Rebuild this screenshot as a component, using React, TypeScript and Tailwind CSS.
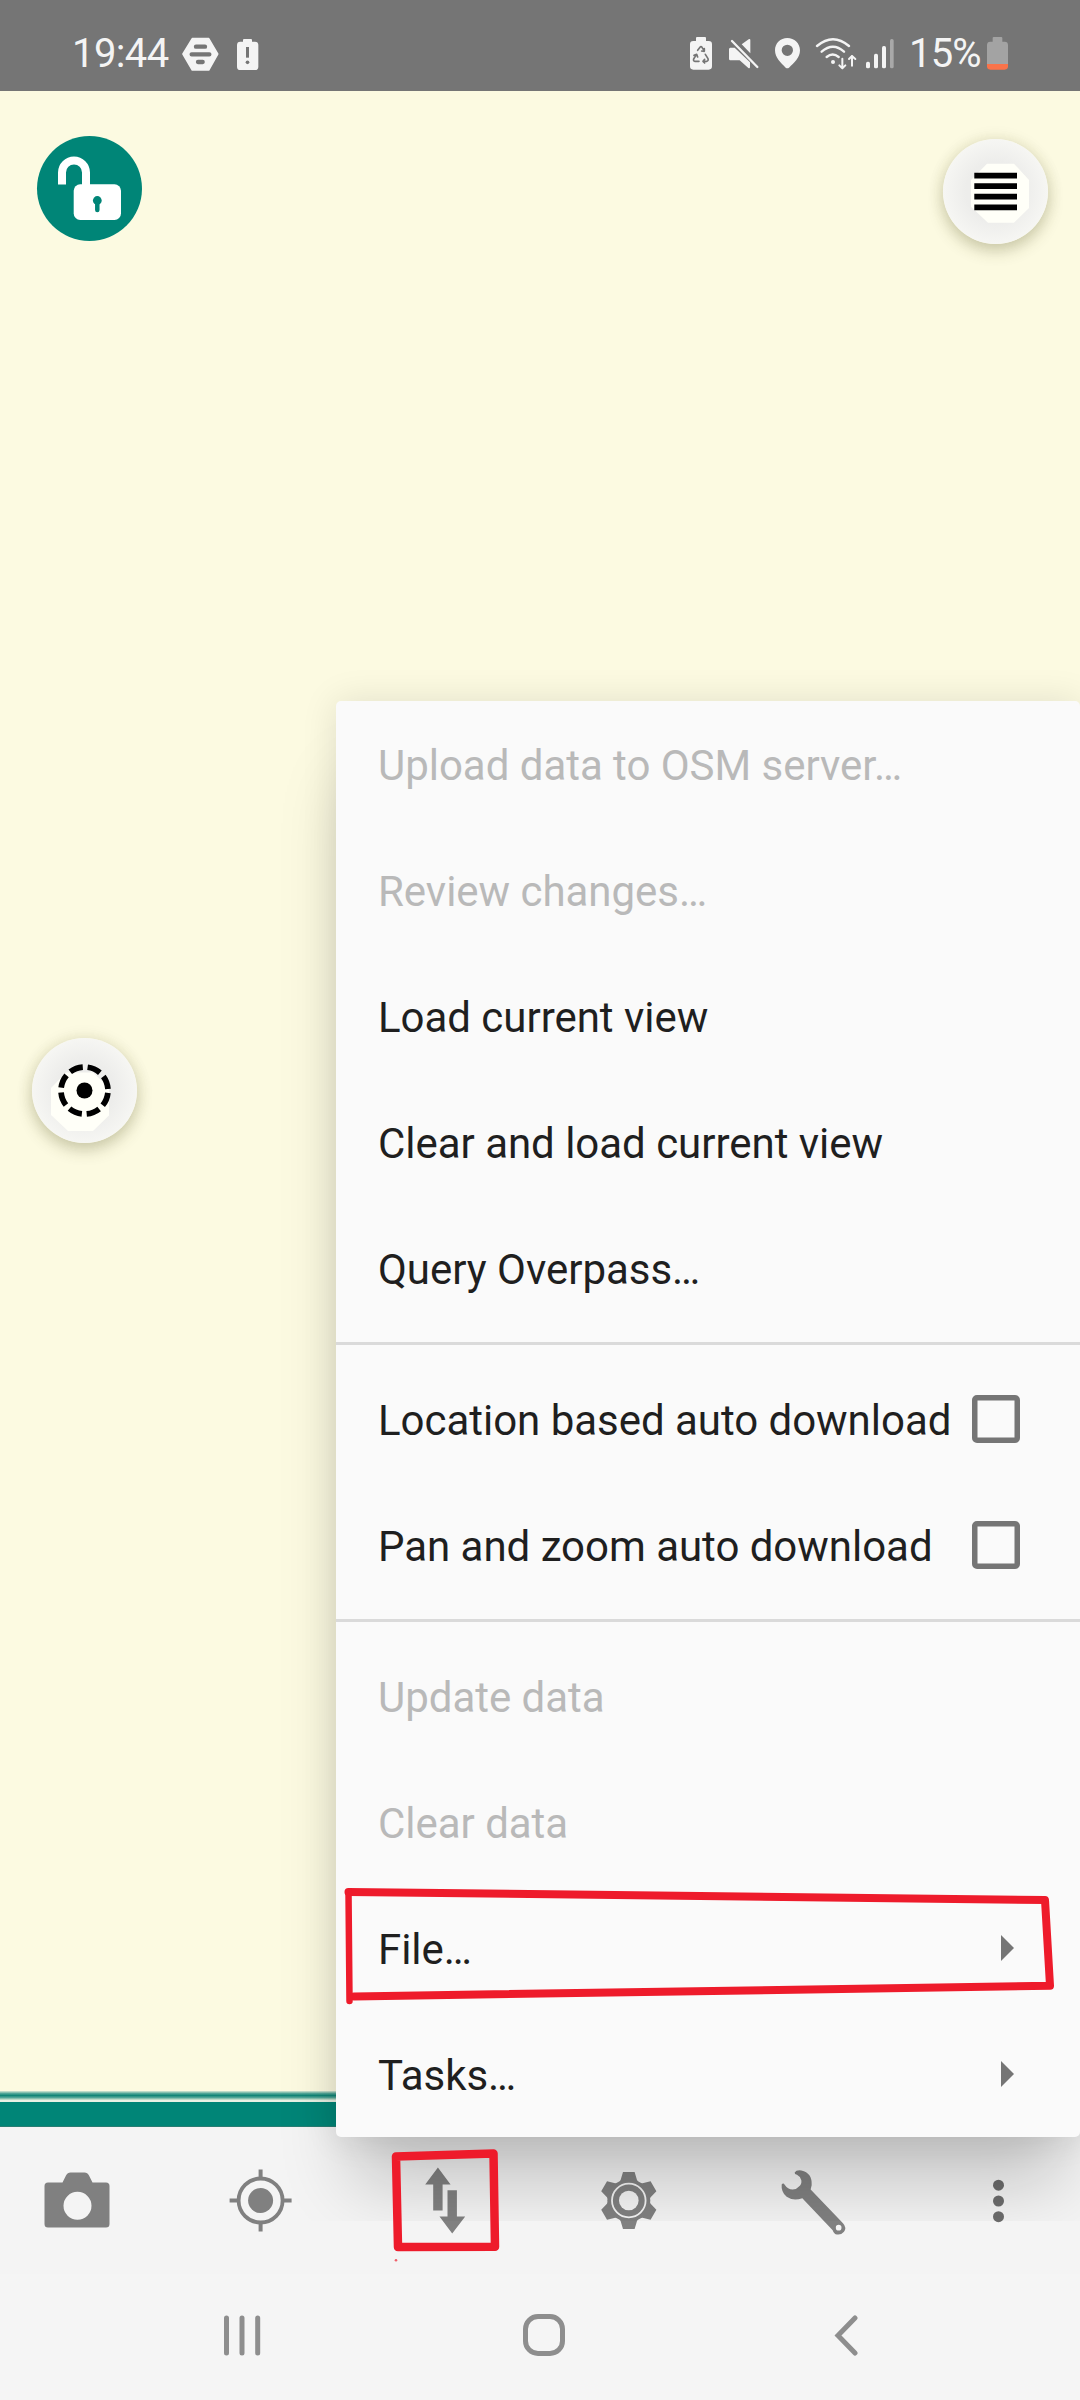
import type { ReactNode } from "react";

/* Status glyphs are drawn on a 3x grid: 102 units high = 34px. */
function StatusIcon({ x, w, children }: { x: number; w: number; children: ReactNode }) {
  return (
    <svg className="block shrink-0" width={w} height={34} viewBox={`${x} 111 ${w * 3} 102`} fill="#f4f4f4">
      {children}
    </svg>
  );
}

function StatusBar() {
  return (
    <header className="flex h-[91px] shrink-0 items-center justify-between bg-[#757575] pt-[17px] pr-[71px] pl-[72px] text-[40px] leading-none text-[#f4f4f4]">
      <div className="flex items-center">
        <span className="w-[109px] tracking-[-0.6px]">19:44</span>
        <StatusIcon x={543} w={39}>
          <path
            d="M577 116h49l27 46-27 48h-49l-28-48z"
            stroke="#f4f4f4"
            strokeWidth="5"
            strokeLinejoin="round"
          />
          <path d="M588 140h27M575 163h53M594 186h14" stroke="#757575" strokeWidth="13" strokeLinecap="round" />
        </StatusIcon>
        <span className="w-[15px]" />
        <StatusIcon x={705} w={25}>
          <path d="M729 120q0-3 3-3h21q3 0 3 3v5h9q10 0 10 10v65q0 10-10 10h-44q-10 0-10-10v-65q0-10 10-10h8z" />
          <path d="M738 141h9v32h-9z" fill="#757575" />
          <circle cx="742.500" cy="187" r="5.500" fill="#757575" />
        </StatusIcon>
      </div>
      <div className="flex items-center">
        <StatusIcon x={84} w={26}>
          <path d="M108 114q0-3 3-3h24q3 0 3 3v9h8q10 0 10 10v66q0 10-10 10h-46q-10 0-10-10v-66q0-10 10-10h8z" />
          <g fill="none" stroke="#757575" strokeWidth="5" strokeLinecap="round" strokeLinejoin="round">
            <path d="M113 151l7-9q3-4 6 0l7 11M136 163l8 13q2 7-4 8h-11l5-6M129 184l5 5M117 184h-12q-6-1-4-7l8-13M102 166l8-3 3 8M133 146v8l-8-1" />
          </g>
        </StatusIcon>
        <span className="w-[13px]" />
        <StatusIcon x={201} w={33}>
          <path d="M245 133l21-15q5-3 5 3v39zM211 143h13l46 44v14q0 6-5 3l-26-23h-28q-4 0-4-5v-28q0-5 4-5z" />
          <path d="M216 123l76 78" stroke="#f4f4f4" strokeWidth="7" strokeLinecap="round" />
          <path d="M224 119l74 76" stroke="#757575" strokeWidth="4" />
        </StatusIcon>
        <span className="w-[14px]" />
        <StatusIcon x={342} w={27}>
          <path
            fillRule="evenodd"
            d="M382 114c-21 0-37 16-37 37 0 22 18 38 32 52q5 4 10 0c15-14 33-30 33-52 0-21-17-37-38-37zm0 20a17 17 0 1 1 0 34 17 17 0 0 1 0-34z"
          />
        </StatusIcon>
        <span className="w-[13px]" />
        <StatusIcon x={462} w={44}>
          <g fill="none" stroke="#f4f4f4" strokeWidth="7" strokeLinecap="round" strokeLinejoin="round">
            <path d="M471 138q48-41 96 0M485 155q34-30 67 0M500 171q18-15 36 0" />
            <path d="M547 176v29M538 196l9 9 9-9M576 197v-29M567 177l9-9 10 9" strokeWidth="6" />
          </g>
          <circle cx="519" cy="186" r="6" />
        </StatusIcon>
        <span className="w-[6px]" />
        <StatusIcon x={612} w={32}>
          <rect x="618" y="185" width="12" height="20" rx="5" />
          <rect x="642" y="161" width="12" height="44" rx="5" />
          <rect x="666" y="138" width="12" height="67" rx="5" />
          <rect x="690" y="117" width="11" height="88" rx="5" fill="#a9a9a9" />
        </StatusIcon>
        <span className="ml-[13px] w-[77px] tracking-[-0.8px]">15%</span>
        <StatusIcon x={978} w={23}>
          <path
            d="M998 114q0-3 3-3h23q3 0 3 3v11h7q10 0 10 10v57h-63v-57q0-10 10-10h7z"
            fill="#a3a3a3"
          />
          <path d="M981 192h63v7q0 10-10 10h-43q-10 0-10-10z" fill="#f9734a" />
        </StatusIcon>
      </div>
    </header>
  );
}

const fab =
  "absolute size-[105px] rounded-full bg-[radial-gradient(circle,#ededeb_40%,#f6f6f3_70%)] shadow-[0_7px_16px_rgba(70,70,20,0.24),0_0_16px_rgba(70,70,20,0.1)]";

function LockButton() {
  return (
    <button className="absolute top-[136px] left-[37px] size-[105px] rounded-full bg-[#008577]">
      <svg className="block" width="105" height="105" viewBox="0 0 105 105">
        <path d="M25 48.500V36.500a12 12 0 0 1 24 0V52" fill="none" stroke="#fff" strokeWidth="8" />
        <rect x="36.700" y="48.300" width="47.300" height="35.700" rx="6.500" fill="#fff" />
        <circle cx="60.300" cy="64.500" r="4.400" fill="#008577" />
        <path d="M60.300 66v8" stroke="#008577" strokeWidth="4.500" strokeLinecap="round" />
      </svg>
    </button>
  );
}

function LayersButton() {
  return (
    <button className={`${fab} top-[139px] left-[943px]`}>
      <svg className="block" width="105" height="105" viewBox="0 0 105 105">
        <path d="M44 24.700h27l15 16.300v28l-15 14.700h-26l-17-16v-26.700z" fill="#fffff8" />
        <path
          d="M31.300 36.600h42.700M31.300 47.200h42.700M31.300 57.700h42.700M31.300 68.300h42.700"
          stroke="#000"
          strokeWidth="5.700"
        />
      </svg>
    </button>
  );
}

function FollowButton() {
  return (
    <button className={`${fab} top-[1038px] left-[32px]`}>
      <svg className="block" width="105" height="105" viewBox="0 0 105 105">
        <path d="M34 34.500h27l16 15v28l-16 15.500h-25l-17-16v-27z" fill="#fffff8" />
        <circle
          cx="52.500"
          cy="52.500"
          r="23.500"
          fill="none"
          stroke="#000"
          strokeWidth="5.700"
          strokeDasharray="13.457 5"
          strokeDashoffset="-2.500"
        />
        <circle cx="52.500" cy="52.500" r="8" />
      </svg>
    </button>
  );
}

type Item = { label: string; disabled?: boolean; kind?: "check" | "sub" };

const groups: Item[][] = [
  [
    { label: "Upload data to OSM server…", disabled: true },
    { label: "Review changes…", disabled: true },
    { label: "Load current view" },
    { label: "Clear and load current view" },
    { label: "Query Overpass…" },
  ],
  [
    { label: "Location based auto download", kind: "check" },
    { label: "Pan and zoom auto download", kind: "check" },
  ],
  [
    { label: "Update data", disabled: true },
    { label: "Clear data", disabled: true },
    { label: "File…", kind: "sub" },
    { label: "Tasks…", kind: "sub" },
  ],
];

function MenuRow({ label, disabled, kind }: Item) {
  return (
    <li
      className={`flex h-[126px] items-center justify-between pl-[42px] text-[42px] leading-none whitespace-nowrap ${
        disabled ? "text-[#b9b9b9]" : "text-[#1f1f1f]"
      }`}
    >
      <span className="pt-[4px] tracking-[-0.03px]">{label}</span>
      {kind === "check" && (
        <span className="mr-[60px] size-[48px] rounded-[5px] border-[5px] border-[#757575] shadow-[inset_0_0_0_0.5px_#757575]" />
      )}
      {kind === "sub" && (
        <svg className="mr-[66px] mb-[1px]" width="13" height="26" viewBox="0 0 13 26" fill="#757575">
          <path d="M0 0l13 13L0 26z" />
        </svg>
      )}
    </li>
  );
}

function Menu() {
  return (
    <div className="pointer-events-none absolute inset-x-0 top-0 h-[2221px] overflow-hidden">
      <div className="absolute top-[701px] left-[336px] w-[744px] rounded-[5px] bg-[#fafafa] shadow-[0_0_36px_rgba(0,0,0,0.11),0_62px_68px_-16px_rgba(0,0,0,0.2)]">
        {groups.map((rows, i) => (
          <div key={i}>
            {i > 0 && <div className="my-[11px] h-[3px] bg-[#dadada]" />}
            <ul>
              {rows.map((row) => (
                <MenuRow key={row.label} {...row} />
              ))}
            </ul>
          </div>
        ))}
      </div>
    </div>
  );
}

function ToolIcon({ children }: { children: ReactNode }) {
  return (
    <svg className="block" width="84" height="84" viewBox="0 0 84 84" fill="#808080">
      {children}
    </svg>
  );
}

function Toolbar() {
  return (
    <div className="flex h-[147px] items-center justify-between bg-[#f4f4f4] pr-[39px] pl-[35px]">
      <ToolIcon>
        <path
          fillRule="evenodd"
          d="M13 23.500h14.500l3.500-7q1.500-3 4.500-3h14q3 0 4.500 3l3.500 7H71q3.500 0 3.500 3.500v38q0 3.500-3.500 3.500H13q-3.500 0-3.500-3.500V27q0-3.500 3.500-3.500zM42.500 32.800a14 14 0 1 0 0 28 14 14 0 0 0 0-28z"
        />
      </ToolIcon>
      <ToolIcon>
        <circle cx="41.600" cy="41.500" r="12.500" />
        <circle cx="41.600" cy="41.500" r="22" fill="none" stroke="#808080" strokeWidth="3.800" />
        <path d="M41.600 10.500v8M41.600 64.500v8M10.600 41.500h8M64.600 41.500h8" stroke="#808080" strokeWidth="4" />
      </ToolIcon>
      <ToolIcon>
        <path d="M33.900 8.500L46.600 25.500h-8v26h-9.400v-26h-8zM43.500 31.200h9.400v26.300h8.300L48.200 74.500 35.500 57.500h8z" />
      </ToolIcon>
      <ToolIcon>
        <g transform="translate(40.800 41.500)">
          <circle r="21.500" />
          {[0, 60, 120, 180, 240, 300].map((a) => (
            <path key={a} transform={`rotate(${a})`} d="M-5.800-28.500H5.800L8.200-20.500Q10-17 12-15H-12Q-10-17-8.200-20.500z" />
          ))}
          <circle r="16.800" fill="none" stroke="#f4f4f4" strokeWidth="1.800" />
          <circle r="9.800" fill="#f4f4f4" />
        </g>
      </ToolIcon>
      <ToolIcon>
        <g transform="scale(.3333) translate(-158 -265.500)">
          <path
            fillRule="evenodd"
            d="M223 306Q228 298 243 300Q276 307 274 344Q272 352 271 357L368 458Q380 471 371 484Q363 494 350 492Q341 491 337 479L246 383Q219 393 199 379Q182 365 184 342Q189 336 193 343Q202 357 217 357Q229 357 235 349Q245 341 243 329Q240 318 230 313Q222 311 223 306zM355 463a8.500 8.500 0 1 0 0 17 8.500 8.500 0 0 0 0-17z"
          />
        </g>
      </ToolIcon>
      <ToolIcon>
        <g fill="#6c6c6c">
          <circle cx="41.500" cy="26.200" r="5.500" />
          <circle cx="41.500" cy="42" r="5.500" />
          <circle cx="41.500" cy="57.700" r="5.500" />
        </g>
      </ToolIcon>
    </div>
  );
}

function NavBar() {
  return (
    <nav className="flex h-[126px] items-center bg-[#f5f5f5] pb-[4px] pl-[222px]">
      <svg width="40" height="42" viewBox="0 0 40 42" stroke="#8e8e8e" strokeWidth="5" strokeLinecap="round">
        <path d="M4.500 4v35M20 4v35M35.700 4v35" />
      </svg>
      <span className="ml-[261px] size-[42px] rounded-[15px] border-[5px] border-[#8e8e8e]" />
      <svg
        className="ml-[268px]"
        width="26"
        height="42"
        viewBox="0 0 26 42"
        fill="none"
        stroke="#8e8e8e"
        strokeWidth="5"
        strokeLinecap="round"
      >
        <path d="M22 4L5 21.500l17 17.500" />
      </svg>
    </nav>
  );
}

/* Hand-drawn red outlines around the transfer button and the File entry. */
function Markup() {
  return (
    <>
      <svg
        className="absolute top-[1880px] left-[336px]"
        width="730"
        height="130"
        fill="none"
        stroke="#ee1b2b"
        strokeWidth="8"
        strokeLinecap="round"
        strokeLinejoin="round"
      >
        <path d="M12.500 12L709 20l5 85.700L18 116.500" />
        <path d="M12.500 12L13.500 121" strokeWidth="6.500" />
      </svg>
      <svg
        className="absolute top-[2140px] left-[385px]"
        width="125"
        height="130"
        fill="none"
        stroke="#ee1b2b"
        strokeWidth="8.500"
        strokeLinejoin="round"
      >
        <path d="M11 16.500l97.500-3 1.500 93.200-97 .3z" />
        <circle cx="11" cy="120.300" r="1.300" fill="#f0606b" stroke="none" />
      </svg>
    </>
  );
}

export default function App() {
  return (
    <div className="relative flex h-[2400px] w-[1080px] flex-col overflow-hidden bg-[#f5f5f5] font-[Roboto,sans-serif]">
      <StatusBar />
      <main className="flex-1 bg-[#fcfae1]" />
      <div className="h-[9px] bg-[linear-gradient(#d9e8d4,#4fa596_28%,#128577_50%,#4fa596_72%,#d9e8d4)]" />
      <div className="h-[2px] bg-[#e8f1e4]" />
      <div className="h-[25px] border-b border-[#287d73] bg-[#008577]" />
      <Toolbar />
      <NavBar />
      <LockButton />
      <LayersButton />
      <FollowButton />
      <Menu />
      <Markup />
    </div>
  );
}
